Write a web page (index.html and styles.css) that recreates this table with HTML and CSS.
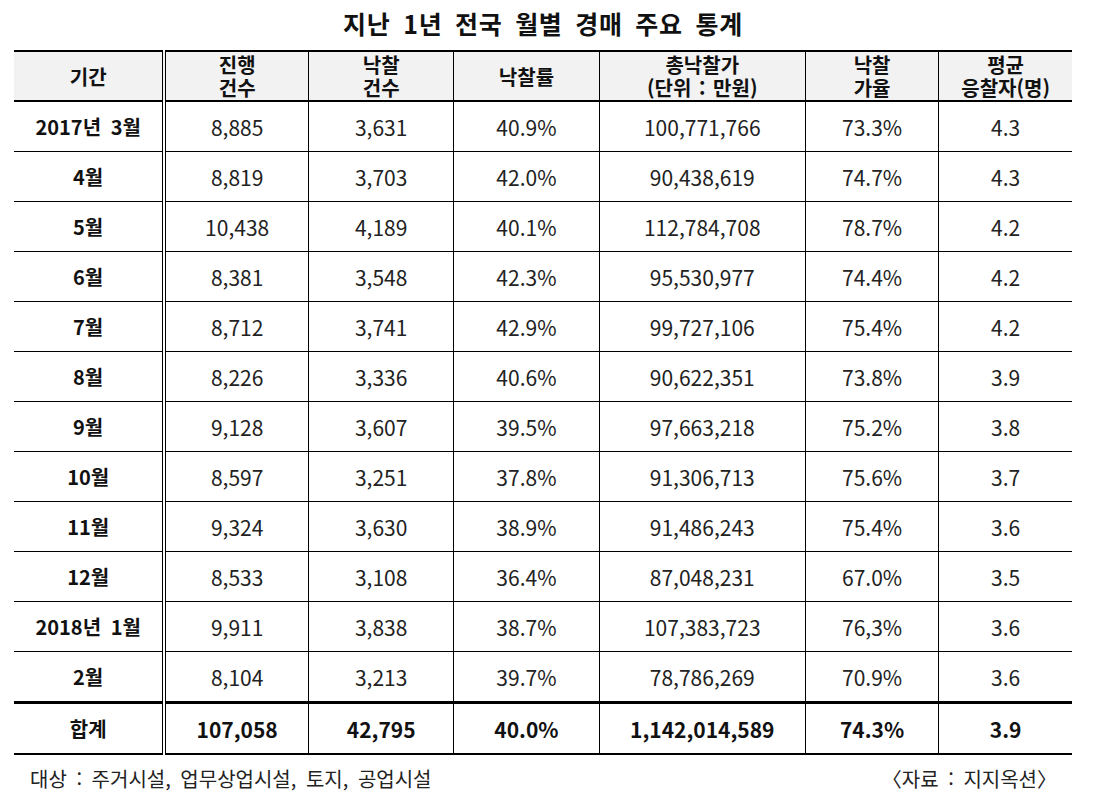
FILE: index.html
```html
<!DOCTYPE html>
<html lang="ko">
<head>
<meta charset="utf-8">
<title>지난 1년 전국 월별 경매 주요 통계</title>
<link rel="stylesheet" href="styles.css">
</head>
<body>
<div class="page">
  <h1 class="title">지난 1년 전국 월별 경매 주요 통계</h1>
  <table class="stats">
    <colgroup>
      <col class="c1"><col class="c2"><col class="c3"><col class="c4"><col class="c5"><col class="c6"><col class="c7">
    </colgroup>
    <thead>
      <tr>
        <th class="first">기간</th>
        <th>진행<br>건수</th>
        <th>낙찰<br>건수</th>
        <th>낙찰률</th>
        <th>총낙찰가<br>(단위 : 만원)</th>
        <th>낙찰<br>가율</th>
        <th>평균<br>응찰자(명)</th>
      </tr>
    </thead>
    <tbody>
      <tr><th class="first">2017년 3월</th><td>8,885</td><td>3,631</td><td>40.9%</td><td>100,771,766</td><td>73.3%</td><td>4.3</td></tr>
      <tr><th class="first">4월</th><td>8,819</td><td>3,703</td><td>42.0%</td><td>90,438,619</td><td>74.7%</td><td>4.3</td></tr>
      <tr><th class="first">5월</th><td>10,438</td><td>4,189</td><td>40.1%</td><td>112,784,708</td><td>78.7%</td><td>4.2</td></tr>
      <tr><th class="first">6월</th><td>8,381</td><td>3,548</td><td>42.3%</td><td>95,530,977</td><td>74.4%</td><td>4.2</td></tr>
      <tr><th class="first">7월</th><td>8,712</td><td>3,741</td><td>42.9%</td><td>99,727,106</td><td>75.4%</td><td>4.2</td></tr>
      <tr><th class="first">8월</th><td>8,226</td><td>3,336</td><td>40.6%</td><td>90,622,351</td><td>73.8%</td><td>3.9</td></tr>
      <tr><th class="first">9월</th><td>9,128</td><td>3,607</td><td>39.5%</td><td>97,663,218</td><td>75.2%</td><td>3.8</td></tr>
      <tr><th class="first">10월</th><td>8,597</td><td>3,251</td><td>37.8%</td><td>91,306,713</td><td>75.6%</td><td>3.7</td></tr>
      <tr><th class="first">11월</th><td>9,324</td><td>3,630</td><td>38.9%</td><td>91,486,243</td><td>75.4%</td><td>3.6</td></tr>
      <tr><th class="first">12월</th><td>8,533</td><td>3,108</td><td>36.4%</td><td>87,048,231</td><td>67.0%</td><td>3.5</td></tr>
      <tr><th class="first">2018년 1월</th><td>9,911</td><td>3,838</td><td>38.7%</td><td>107,383,723</td><td>76,3%</td><td>3.6</td></tr>
      <tr><th class="first">2월</th><td>8,104</td><td>3,213</td><td>39.7%</td><td>78,786,269</td><td>70.9%</td><td>3.6</td></tr>
    </tbody>
    <tfoot>
      <tr class="total"><th class="first">합계</th><td>107,058</td><td>42,795</td><td>40.0%</td><td>1,142,014,589</td><td>74.3%</td><td>3.9</td></tr>
    </tfoot>
  </table>
  <div class="notes">
    <span class="target">대상 : 주거시설, 업무상업시설, 토지, 공업시설</span>
    <span class="source">〈자료 : 지지옥션〉</span>
  </div>
</div>
</body>
</html>
```

FILE: styles.css
```css
html, body {
  margin: 0;
  padding: 0;
  background: #ffffff;
}

body {
  font-family: "Noto Sans CJK KR", "Noto Sans", sans-serif;
  color: #1a1a1a;
}

.page {
  width: 1094px;
  height: 796px;
  padding: 0 22px 0 14px;
  box-sizing: border-box;
}

.title {
  margin: 0;
  height: 50px;
  font-size: 25px;
  font-weight: 700;
  line-height: 46px;
  text-align: center;
  letter-spacing: 0.7px;
  word-spacing: 5px;
  color: #111;
}

.stats {
  width: 1058px;
  border-collapse: collapse;
  table-layout: fixed;
}

.c1 { width: 150px; }
.c2 { width: 144px; }
.c3 { width: 145px; }
.c4 { width: 145px; }
.c5 { width: 206px; }
.c6 { width: 133px; }
.c7 { width: 133px; }

.stats th,
.stats td {
  padding: 0;
  text-align: center;
  vertical-align: middle;
  border-top: 1px solid #000;
  border-bottom: 1px solid #000;
  border-left: 1px solid #000;
  height: 49px;
}

.stats tr > :first-child {
  border-left: none;
}

.stats td {
  font-size: 21px;
  font-weight: 400;
  color: #222;
}

.stats th {
  font-size: 20px;
  font-weight: 700;
  color: #111;
  word-spacing: 4px;
}

.stats th.first {
  border-right: 4px double #000;
}

.stats thead th {
  background: #f2f2f2;
  border-top: 2px solid #000;
  border-bottom: 2px solid #000;
  line-height: 23px;
  height: 48px;
  word-spacing: 2px;
}

.stats tfoot th,
.stats tfoot td {
  border-top: 3px solid #000;
  border-bottom: 2px solid #000;
  font-weight: 700;
  color: #111;
}

.notes {
  display: flex;
  justify-content: space-between;
  align-items: center;
  height: 46px;
  padding: 0 15px 0 16px;
  font-size: 20px;
  color: #222;
  word-spacing: 4px;
}
```
